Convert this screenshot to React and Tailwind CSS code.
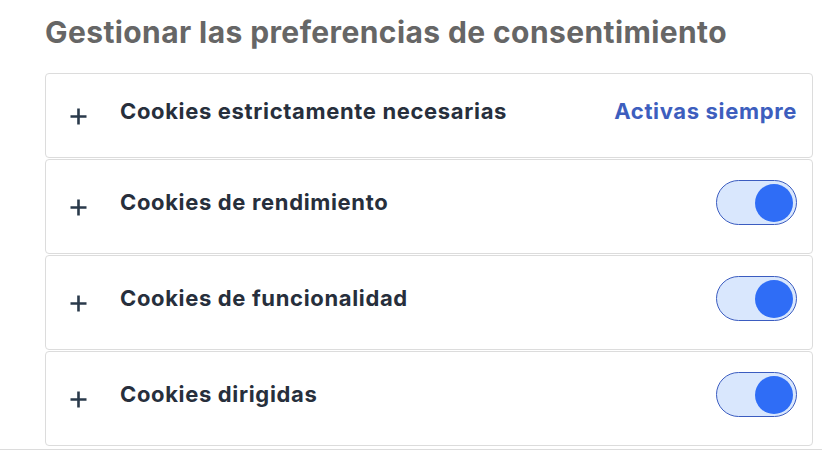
import React from "react";

function Plus() {
  return (
    <svg width="17" height="17" viewBox="0 0 17 17" className="shrink-0">
      <path d="M8.5 0.5V16.5M0.5 8.5H16.5" stroke="#2a3a4b" strokeWidth="2.6" strokeLinecap="butt" />
    </svg>
  );
}

function Toggle() {
  return (
    <div className="w-[81px] h-[45px] rounded-full border border-[#3b5cc0] bg-[#d9e7fd] flex items-center justify-end pr-[3px]">
      <div className="w-[38px] h-[38px] rounded-full bg-[#2f6df6]" />
    </div>
  );
}

function Row({ title, right, h }) {
  return (
    <div className={`${h} border border-[#dcdcdc] rounded-[4px] flex items-center pl-[24px] pr-[15px] pb-[8px]`}>
      <div className="w-[50px] flex items-center mt-[10px]">
        <Plus />
      </div>
      <div className="flex-1 text-[22px] font-bold text-[#272f3c] tracking-[0.65px]">{title}</div>
      {right}
    </div>
  );
}

export default function App() {
  return (
    <div className="w-[822px] h-[452px] bg-white overflow-hidden" style={{ fontFamily: "Inter, 'Noto Sans', sans-serif" }}>
      <div className="pl-[45px] pr-[9px]">
        <h1 className="pt-[14px] h-[73px] text-[30px] font-bold text-[#666666] tracking-[0.4px] leading-[36px]">
          Gestionar las preferencias de consentimiento
        </h1>
        <div className="flex flex-col gap-[1px]">
          <Row
            h="h-[85px]"
            title="Cookies estrictamente necesarias"
            right={<span className="text-[22px] font-bold text-[#3d5ebe] tracking-[0.65px]">Activas siempre</span>}
          />
          <Row h="h-[95px]" title="Cookies de rendimiento" right={<Toggle />} />
          <Row h="h-[95px]" title="Cookies de funcionalidad" right={<Toggle />} />
          <Row h="h-[95px]" title="Cookies dirigidas" right={<Toggle />} />
        </div>
      </div>
      <div className="mt-[3px] border-t border-[#dcdcdc]" />
    </div>
  );
}
